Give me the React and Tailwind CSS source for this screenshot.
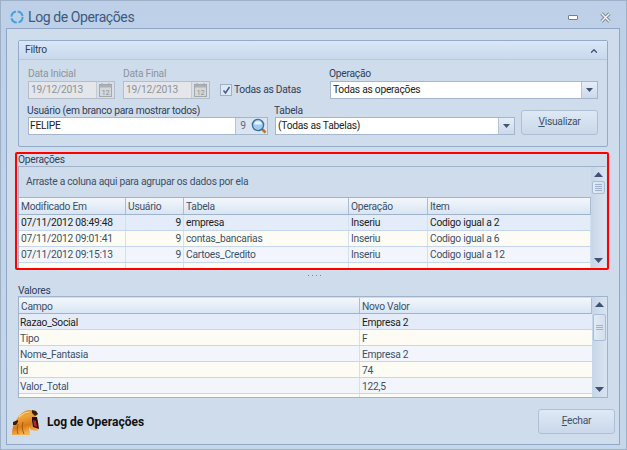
import { ChevronUp } from 'lucide-react'

const font = 'font-["Roboto","Liberation_Sans",sans-serif]'

function Arrow({ up }) {
  return (
    <svg width="9" height="5" viewBox="0 0 9 5">
      <path d={up ? 'M4.5 0L9 5H0z' : 'M0 0h9L4.5 5z'} fill="#3f5273" />
    </svg>
  )
}

function Calendar() {
  return (
    <div className="w-[18px] h-full flex items-center justify-center bg-[#d9dfe6] border-l border-[#c3cbd5]">
      <svg width="13" height="14" viewBox="0 0 13 14">
        <rect x="0.5" y="1.5" width="12" height="12" fill="#d5d8db" stroke="#a3a8ad" />
        <rect x="1" y="2" width="11" height="2.5" fill="#aeb2b6" />
        <path d="M3 0v3M10 0v3" stroke="#a3a8ad" />
        <text x="6.5" y="12" textAnchor="middle" fontSize="7.5" fill="#8c9196">12</text>
      </svg>
    </div>
  )
}

function DateBox() {
  return (
    <div className="w-[87px] h-[18px] flex items-center bg-[#e4e6e9] border border-[#b4bdc9] text-[#8d949c]">
      <span className="flex-1 pl-[2px] pt-[1px]">19/12/2013</span>
      <Calendar />
    </div>
  )
}

function Combo({ width, children }) {
  return (
    <div className={`${width} h-[18px] flex items-center bg-white border border-[#a4b6cd] text-[#222]`}>
      <span className="flex-1 pl-[2px] pt-[1px]">{children}</span>
      <div className="w-[16px] h-full flex items-center justify-center bg-gradient-to-b from-[#e6eef7] to-[#cbd9ea] border-l border-[#b4c5da]">
        <svg width="7" height="4" viewBox="0 0 7 4"><path d="M0 0h7L3.5 4z" fill="#44546c" /></svg>
      </div>
    </div>
  )
}

function Btn({ first, rest }) {
  return (
    <div className="w-[77px] h-[25px] flex items-center justify-center rounded-[3px] border border-[#aebfd4] bg-gradient-to-b from-[#dfe9f5] to-[#c9d8ea] text-[#3d5068]">
      <span><span className="underline">{first}</span>{rest}</span>
    </div>
  )
}

function Scrollbar({ thumbTop, thumbH, grip }) {
  return (
    <div className="w-[15px] shrink-0 flex flex-col items-center justify-between py-[5px] bg-gradient-to-r from-[#c7d6e8] to-[#d9e4f1] relative">
      <Arrow up />
      <div
        className={`absolute left-[1px] w-[13px] rounded-[2px] border border-[#a9bdd6] bg-gradient-to-r from-[#e2ebf6] to-[#d2dfee] flex flex-col items-center justify-center gap-[1px] ${thumbTop} ${thumbH}`}
      >
        {grip.map(i => <div key={i} className="w-[7px] h-px bg-[#9fb2ca]" />)}
      </div>
      <Arrow />
    </div>
  )
}

const opCols = ['w-[107px]', 'w-[58px]', 'w-[165px]', 'w-[79px]', 'flex-1']

function OpRow({ cells, tone }) {
  return (
    <div className={`h-[16px] flex shrink-0 border-b border-[#c5d7ef] ${tone}`}>
      {cells.map((c, i) => (
        <div key={i} className={`${opCols[i]} shrink-0 border-r border-[#d3e0f2] px-[2px] leading-[15px] whitespace-nowrap overflow-hidden ${i === 1 ? 'text-right' : ''}`}>
          {c}
        </div>
      ))}
    </div>
  )
}

function ValRow({ a, b, tone }) {
  return (
    <div className={`h-[16px] flex shrink-0 border-b border-[#c5d7ef] ${tone}`}>
      <div className="w-[341px] shrink-0 border-r border-[#d3e0f2] px-[1px] leading-[17px]">{a}</div>
      <div className="flex-1 px-[2px] leading-[17px]">{b}</div>
    </div>
  )
}

const headCell = 'shrink-0 border-r border-[#a9bcd4] pl-[2px] leading-[17px] text-[#3d5068]'

export default function App() {
  return (
    <div className={`${font} w-[627px] h-[450px] overflow-hidden text-[10.25px] tracking-[-0.25px] leading-none bg-gradient-to-b from-[#bdd0e7] to-[#c6d7ea] border border-[#9eb0c8] flex flex-col text-[#3d5068]`}>
      {/* titulo */}
      <div className="h-[27px] shrink-0 flex items-center pl-[8px] pr-[15px] pt-[5px]">
        <svg width="16" height="16" viewBox="0 0 16 16" fill="none">
          <circle cx="8" cy="8" r="5.6" stroke="#3ea4e0" strokeWidth="2" strokeDasharray="7 1.8" />
        </svg>
        <span className="ml-[3px] text-[14px] tracking-[-0.4px] text-[#3c5a80] flex-1">Log de Operações</span>
        <div className="w-[10px] h-[5px] rounded-[1px] border border-[#6f7f94] bg-white mr-[22px]" />
        <svg width="11" height="11" viewBox="0 0 11 11">
          <path d="M1.5 1.5l8 8M9.5 1.5l-8 8" stroke="#7d8a9b" strokeWidth="3.2" />
          <path d="M1.5 1.5l8 8M9.5 1.5l-8 8" stroke="#f2f5f9" strokeWidth="1.3" />
        </svg>
      </div>

      {/* painel */}
      <div className="flex-1 ml-[5px] mr-[6px] mb-[4px] border border-[#8fa8c7] bg-[#cfdcec] flex flex-col px-[11px] pt-[11px]">
        {/* filtro */}
        <div className="h-[107px] shrink-0 border border-[#92abc9] rounded-[2px] flex flex-col">
          <div className="h-[19px] shrink-0 flex items-center justify-between pl-[6px] pr-[8px] pt-[1px] bg-gradient-to-b from-[#d9e7f7] to-[#c9d9ec] border-b border-[#b5c8de] text-[#2f4058]">
            <span>Filtro</span>
            <ChevronUp size={10} strokeWidth={3} className="text-[#3f5273]" />
          </div>
          <div className="flex-1 flex flex-col pl-[9px] pr-[9px] pt-[7px]">
            <div className="flex h-[32px]">
              <div className="w-[95px] flex flex-col gap-[1px] text-[#8d949c]">
                <span className="h-[13px] leading-[13px]">Data Inicial</span>
                <DateBox />
              </div>
              <div className="w-[97px] flex flex-col gap-[1px] text-[#8d949c]">
                <span className="h-[13px] leading-[13px]">Data Final</span>
                <DateBox />
              </div>
              <div className="w-[110px] flex items-center gap-[2px] pt-[14px] text-[#2f4058]">
                <div className="w-[12px] h-[12px] bg-[#dfe8f3] border border-[#9db1ca] flex items-center justify-center">
                  <svg width="9" height="9" viewBox="0 0 9 9"><path d="M1.5 4.5l2 2.5 4-6" fill="none" stroke="#3f5f8f" strokeWidth="1.5" /></svg>
                </div>
                <span>Todas as Datas</span>
              </div>
              <div className="flex-1 flex flex-col gap-[1px]">
                <span className="h-[13px] leading-[13px] text-[#2f4058] ml-[-1px]">Operação</span>
                <Combo width="w-[268px]">Todas as operações</Combo>
              </div>
            </div>
            <div className="flex h-[32px] mt-[5px]">
              <div className="w-[248px] flex flex-col">
                <span className="h-[13px] leading-[13px] text-[#2f4058] ml-[-1px]">Usuário (em branco para mostrar todos)</span>
                <div className="w-[240px] h-[18px] flex items-center bg-white border border-[#a4b6cd] text-[#222]">
                  <span className="flex-1 pl-[1px] pt-[1px]">FELIPE</span>
                  <div className="w-[15px] h-full bg-[#dbe5f1] border-l border-[#b4c5da] flex items-center justify-center text-[#5a6b80]">9</div>
                  <div className="w-[17px] h-full bg-[#dbe5f1] flex items-center justify-center">
                    <svg width="16" height="16" viewBox="0 0 16 16">
                      <path d="M10.5 10.5l4 4" stroke="#b5752a" strokeWidth="2.5" />
                      <circle cx="7" cy="7" r="5.6" fill="#9fcdf0" stroke="#3b6f9e" strokeWidth="1.4" />
                      <path d="M3.2 6.5a3.8 3.2 0 0 1 7.6 0z" fill="#e8f5fd" />
                    </svg>
                  </div>
                </div>
              </div>
              <div className="w-[247px] flex flex-col">
                <span className="h-[13px] leading-[13px] text-[#2f4058] ml-[-1px]">Tabela</span>
                <Combo width="w-[240px]">(Todas as Tabelas)</Combo>
              </div>
              <div className="pt-[6px]">
                <Btn first="V" rest="isualizar" />
              </div>
            </div>
          </div>
        </div>

        {/* operacoes */}
        <div className="h-[118px] shrink-0 mt-[5px] ml-[-3px] mr-[-1px] border-2 border-[#ff0000] rounded-[2px] flex flex-col px-[1px]">
          <span className="h-[12px] shrink-0 leading-[11px] text-[#2f4058]">Operações</span>
          <div className="flex-1 min-h-0 flex border-t border-l border-[#9fb3cd] overflow-hidden">
            <div className="flex-1 flex flex-col overflow-hidden min-w-0">
              <div className="h-[30px] shrink-0 flex items-center pl-[7px] bg-[#cfdcec] text-[#3d5068]">Arraste a coluna aqui para agrupar os dados por ela</div>
              <div className="h-[18px] shrink-0 flex border-y border-[#9fb3cd] bg-gradient-to-b from-[#f3f7fc] to-[#d9e5f4]">
                {['Modificado Em', 'Usuário', 'Tabela', 'Operação', 'Item'].map((h, i) => (
                  <div key={h} className={`${opCols[i]} ${headCell}`}>{h}</div>
                ))}
              </div>
              <OpRow tone="bg-[#e3ecf8] text-[#1c1c1c]" cells={['07/11/2012 08:49:48', '9', 'empresa', 'Inseriu', 'Codigo igual a 2']} />
              <OpRow tone="bg-[#fdfcf4]" cells={['07/11/2012 09:01:41', '9', 'contas_bancarias', 'Inseriu', 'Codigo igual a 6']} />
              <OpRow tone="bg-[#f2f6fc]" cells={['07/11/2012 09:15:13', '9', 'Cartoes_Credito', 'Inseriu', 'Codigo igual a 12']} />
              <div className="flex-1 flex bg-[#fdfcf4]">
                {opCols.map((c, i) => <div key={i} className={`${c} shrink-0 border-r border-[#d3e0f2]`} />)}
              </div>
            </div>
            <Scrollbar thumbTop="top-[14px]" thumbH="h-[13px]" grip={[1, 2, 3, 4]} />
          </div>
        </div>

        {/* divisor */}
        <div className="h-[15px] shrink-0 flex justify-center gap-[3px] pt-[5px] pl-[2px]">
          {[1, 2, 3, 4].map(i => <div key={i} className="w-px h-px bg-[#6f84a0]" />)}
        </div>

        {/* valores */}
        <span className="h-[11px] shrink-0 leading-[11px] text-[#2f4058]">Valores</span>
        <div className="h-[102px] shrink-0 flex border border-[#9fb3cd] overflow-hidden">
          <div className="flex-1 flex flex-col min-w-0 overflow-hidden pt-[1px] bg-[#cfdcec]">
            <div className="h-[16px] shrink-0 flex border-b border-[#9fb3cd] bg-gradient-to-b from-[#f3f7fc] to-[#d9e5f4]">
              <div className={`w-[341px] ${headCell}`}>Campo</div>
              <div className={`flex-1 ${headCell}`}>Novo Valor</div>
            </div>
            <ValRow tone="bg-[#e3ecf8] text-[#1c1c1c]" a="Razao_Social" b="Empresa 2" />
            <ValRow tone="bg-[#fdfcf4]" a="Tipo" b="F" />
            <ValRow tone="bg-[#f2f6fc]" a="Nome_Fantasia" b="Empresa 2" />
            <ValRow tone="bg-[#fdfcf4]" a="Id" b="74" />
            <ValRow tone="bg-[#f2f6fc]" a="Valor_Total" b="122,5" />
            <div className="flex-1 flex bg-[#fdfcf4]"><div className="w-[341px] border-r border-[#d3e0f2]" /></div>
          </div>
          <Scrollbar thumbTop="top-[17px]" thumbH="h-[27px]" grip={[1, 2, 3]} />
        </div>

        {/* rodape */}
        <div className="flex-1 flex items-center justify-between ml-[-7px] mr-[-7px] pt-[1px]">
          <div className="flex items-center gap-[7px]">
            <svg width="29" height="28" viewBox="0 0 29 28">
              <defs>
                <linearGradient id="lion" x1="0" y1="0" x2="0.3" y2="1">
                  <stop offset="0" stopColor="#c9791f" />
                  <stop offset="0.35" stopColor="#eea63c" />
                  <stop offset="0.7" stopColor="#dc7a18" />
                  <stop offset="1" stopColor="#f4b552" />
                </linearGradient>
              </defs>
              <path d="M1 27C1 21 2 16 5 12 8 7 12 3 18 2l7 1 2 3-3 3-3 0 0 4 1 6 6 2-2 2-6-1-2-3 1 8z" fill="url(#lion)" />
              <path d="M21 9l5 0 1 5 1 7-6-2-1-6z" fill="#2e0c06" />
              <path d="M22 12l3 1 1 6-3-1z" fill="#c8201a" />
              <path d="M21 2l4 1 2 3-3 2-3-3z" fill="#3a2008" />
              <path d="M2 14l5-2 0 2-2 3-3 0z" fill="#3a2008" />
              <path d="M8 9c3-3 7-5 11-5" fill="none" stroke="#fbd88a" strokeWidth="1.2" />
              <path d="M7 16c-1 4-1 7 0 10M12 14c-1 4-1 8 1 12" fill="none" stroke="#a85a12" strokeWidth="1" />
            </svg>
            <span className="text-[12px] tracking-normal font-bold text-[#111]">Log de Operações</span>
          </div>
          <Btn first="F" rest="echar" />
        </div>
      </div>
    </div>
  )
}
